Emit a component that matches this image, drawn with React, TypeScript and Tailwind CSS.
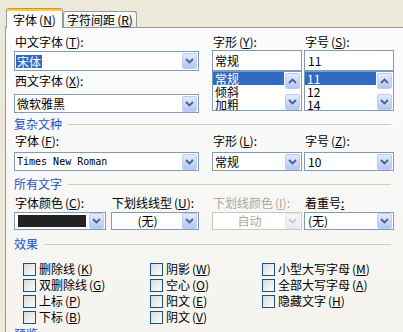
import React from "react";

const Chev = ({ up = false, color = "#4d6185" }: { up?: boolean; color?: string }) => (
  <svg width="9" height="6" viewBox="0 0 9 6">
    <path
      d={up ? "M1 5 L4.5 1.5 L8 5" : "M1 1 L4.5 4.5 L8 1"}
      fill="none"
      stroke={color}
      strokeWidth="1.8"
    />
  </svg>
);

const DropBtn = ({ disabled = false }: { disabled?: boolean }) => (
  <div
    className={`w-[15px] h-[16px] shrink-0 rounded-[2px] border flex items-center justify-center ${
      disabled
        ? "border-[#e3e6ee] bg-linear-to-b from-[#f7f8fb] to-[#e6eaf3]"
        : "border-[#bccdf6] bg-linear-to-b from-[#e3ebfe] to-[#b3c7f5]"
    }`}
  >
    <Chev color={disabled ? "#c3c8d4" : "#4d6185"} />
  </div>
);

const Combo = ({
  className,
  children,
  disabled = false,
}: {
  className: string;
  children?: React.ReactNode;
  disabled?: boolean;
}) => (
  <div
    className={`flex items-center border bg-white pr-px ${
      disabled ? "border-[#c9c7ba]" : "border-[#7f9db9]"
    } ${className}`}
  >
    <div className="flex-1 min-w-0 h-full flex items-center pl-px">{children}</div>
    <DropBtn disabled={disabled} />
  </div>
);

const M = ({ k }: { k: string }) => (
  <span className="ml-[2px]">
    (<span className="underline underline-offset-[1px]">{k}</span>)
  </span>
);

const Label = ({
  t,
  k,
  gray = false,
  className = "",
}: {
  t: string;
  k: string;
  gray?: boolean;
  className?: string;
}) => (
  <div
    className={`h-[14px] leading-[14px] whitespace-nowrap pl-px ${
      gray ? "text-[#aca899]" : "text-black"
    } ${className}`}
  >
    {t}
    <M k={k} />:
  </div>
);

const Header = ({ t, className = "" }: { t: string; className?: string }) => (
  <div className={`w-[377px] h-[14px] flex items-center ${className}`}>
    <span className="text-[#1c52c4] leading-[14px] whitespace-nowrap">{t}</span>
    <div className="flex-1 h-px bg-[#d0d0bf] ml-[6px]" />
  </div>
);

const ScrollBtn = ({ up = false }: { up?: boolean }) => (
  <div className="w-[15px] h-[16px] rounded-[2px] border border-[#bccdf6] bg-linear-to-b from-[#e3ebfe] to-[#b3c7f5] flex items-center justify-center">
    <Chev up={up} />
  </div>
);

const ListBox = ({ items }: { items: string[] }) => (
  <div className="h-[40px] border border-[#7f9db9] bg-white flex overflow-hidden">
    <div className="w-[71px] flex flex-col overflow-hidden">
      {items.map((it, i) => (
        <div
          key={it}
          className={`h-[13px] shrink-0 overflow-hidden leading-[13px] pl-[2px] ${
            i === 0 ? "bg-[#316ac5] text-white" : "text-black"
          }`}
        >
          {it}
        </div>
      ))}
    </div>
    <div className="ml-px w-[16px] flex flex-col justify-between pt-px">
      <ScrollBtn up />
      <ScrollBtn />
    </div>
  </div>
);

const Check = ({ t, k }: { t: string; k: string }) => (
  <div className="h-[16px] flex items-center whitespace-nowrap">
    <div className="w-[13px] h-[13px] border border-[#1c5180] bg-linear-to-br from-[#dcdcd7] to-[#fbfbf9] shrink-0" />
    <span className="ml-[3px] leading-[14px]">
      {t}
      <M k={k} />
    </span>
  </div>
);

export default function App() {
  return (
    <div className="w-[403px] h-[332px] overflow-hidden bg-[#ece9d8] text-[12px] text-black font-['Noto_Sans_CJK_SC',sans-serif]">
      {/* tabs */}
      <div className="h-[27px] flex items-end pl-[6px] relative z-10">
        <div className="w-[57px] h-[20px] -mb-px border-x border-t border-[#919b9c] border-t-[#e68b2c] rounded-t-[3px] bg-[#fcfcfe] flex flex-col">
          <div className="h-[2px] bg-[#ffc83c]" />
          <div className="flex-1 flex items-center justify-center whitespace-nowrap leading-[14px]">
            字体<M k="N" />
          </div>
        </div>
        <div className="w-[74px] h-[16px] border-x border-t border-[#919b9c] rounded-t-[3px] bg-linear-to-b from-[#ffffff] to-[#ecebe6] flex items-center justify-center whitespace-nowrap leading-[14px]">
          字符间距<M k="R" />
        </div>
      </div>

      {/* panel */}
      <div className="ml-[5px] w-[420px] h-[320px] border border-[#919b9c] bg-linear-to-b from-[#fcfcfe] to-[#f4f3ee] pl-[8px] pt-[7px]">
        {/* section 1 */}
        <div className="flex">
          <div className="w-[185px] flex flex-col">
            <Label t="中文字体" k="T" />
            <Combo className="mt-[2px] h-[20px]">
              <span className="bg-[#316ac5] text-white leading-[13px] h-[13px] px-px">宋体</span>
            </Combo>
            <Label t="西文字体" k="X" className="mt-[3px]" />
            <Combo className="mt-[6px] h-[19px]">
              <span className="pl-px">微软雅黑</span>
            </Combo>
          </div>
          <div className="ml-[13px] w-[90px] flex flex-col">
            <Label t="字形" k="Y" />
            <div className="mt-px h-[21px] border border-[#7f9db9] bg-white flex items-center pl-[2px]">常规</div>
            <ListBox items={["常规", "倾斜", "加粗"]} />
          </div>
          <div className="ml-[2px] w-[90px] flex flex-col">
            <Label t="字号" k="S" />
            <div className="mt-px h-[21px] border border-[#7f9db9] bg-white flex items-center pl-[3px]">11</div>
            <ListBox items={["11", "12", "14"]} />
          </div>
        </div>

        {/* section 2 */}
        <Header t="复杂文种" className="mt-[4px]" />
        <div className="flex mt-[3px]">
          <div className="w-[185px] flex flex-col">
            <Label t="字体" k="F" />
            <Combo className="mt-[4px] h-[19px]">
              <span className="pl-px font-['DejaVu_Sans_Mono',monospace] text-[10px]">Times New Roman</span>
            </Combo>
          </div>
          <div className="ml-[13px] w-[90px] flex flex-col">
            <Label t="字形" k="L" />
            <Combo className="mt-[4px] h-[19px]">
              <span className="pl-px">常规</span>
            </Combo>
          </div>
          <div className="ml-[2px] w-[90px] flex flex-col">
            <Label t="字号" k="Z" />
            <Combo className="mt-[4px] h-[19px]">
              <span className="pl-[2px]">10</span>
            </Combo>
          </div>
        </div>

        {/* section 3 */}
        <Header t="所有文字" className="mt-[6px]" />
        <div className="flex mt-[5px]">
          <div className="w-[92px] flex flex-col">
            <Label t="字体颜色" k="C" />
            <Combo className="mt-[2px] h-[18px]">
              <div className="ml-[2px] w-[68px] h-[12px] bg-[#222222]" />
            </Combo>
          </div>
          <div className="ml-[5px] w-[88px] flex flex-col">
            <Label t="下划线线型" k="U" />
            <Combo className="mt-[2px] h-[18px]">
              <span className="w-full text-center">(无)</span>
            </Combo>
          </div>
          <div className="ml-[13px] w-[90px] flex flex-col">
            <Label t="下划线颜色" k="I" gray />
            <Combo className="mt-[2px] h-[18px]" disabled>
              <span className="w-full text-center text-[#aca899]">自动</span>
            </Combo>
          </div>
          <div className="ml-[2px] w-[90px] flex flex-col">
            <div className="h-[14px] leading-[14px] whitespace-nowrap pl-px">
              着重号<span className="underline underline-offset-[1px]">:</span>
            </div>
            <Combo className="mt-[2px] h-[18px]">
              <span className="pl-[2px]">(无)</span>
            </Combo>
          </div>
        </div>

        {/* section 4 */}
        <Header t="效果" className="mt-[7px]" />
        <div className="mt-[10px] pl-[9px] grid grid-cols-[127px_112px_auto]">
          <Check t="删除线" k="K" />
          <Check t="阴影" k="W" />
          <Check t="小型大写字母" k="M" />
          <Check t="双删除线" k="G" />
          <Check t="空心" k="O" />
          <Check t="全部大写字母" k="A" />
          <Check t="上标" k="P" />
          <Check t="阳文" k="E" />
          <Check t="隐藏文字" k="H" />
          <Check t="下标" k="B" />
          <Check t="阴文" k="V" />
          <div />
        </div>
        <Header t="预览" className="mt-[2px]" />
      </div>
    </div>
  );
}
